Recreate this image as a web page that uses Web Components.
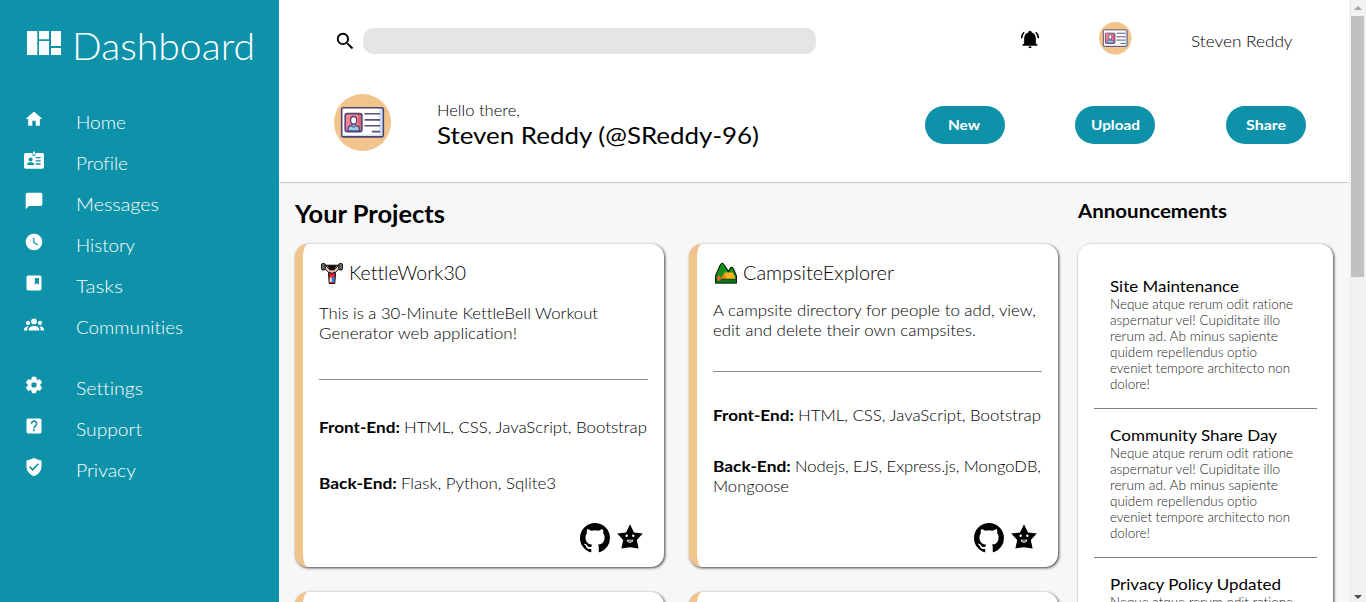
<!DOCTYPE html>
<html lang="en">
<head>
<meta charset="utf-8">
<title>Dashboard</title>
<style>
html,body{margin:0;height:100%;overflow:hidden}
body{font-family:Lato,"Open Sans",sans-serif;font-weight:300;font-size:16px;font-variant-ligatures:none;color:#000;background:#f7f7f7}
</style>
</head>
<body>
<dash-app></dash-app>
<script>
const define = (name, html, setup) => {
  const tpl = document.createElement('template');
  tpl.innerHTML = html;
  customElements.define(name, class extends HTMLElement {
    connectedCallback() {
      if (this.shadowRoot) return;
      this.attachShadow({mode: 'open'}).append(tpl.content.cloneNode(true));
      if (setup) setup(this, this.shadowRoot);
    }
  });
};

/* One line of text, widened so that it measures `w` pixels. */
define('fit-text', `<style>:host{display:inline-block;white-space:pre;vertical-align:baseline}span{display:inline-block;transform-origin:0 50%}</style><span><slot></slot></span>`, (el, root) => {
  const w = parseFloat(el.getAttribute('w'));
  const span = root.querySelector('span');
  const natural = span.getBoundingClientRect().width;
  if (w && natural) {
    el.style.width = w + 'px';
    span.style.transform = `scaleX(${(w / natural).toFixed(4)})`;
  }
});

const ICONS = {
  logo: ['0 0 34 24', '<path d="M0 0h10.3v24H0zM12 0h10v8.3H12zM12 10h10v14H12zM24 0h10v15H24zM24 17h10v7H24z"/>'],
  home: ['0 0 24 24', '<path d="M10 20v-6h4v6h5v-8h3L12 3 2 12h3v8z"/>'],
  profile: ['0 0 24 24', '<path fill-rule="evenodd" d="M2 3.500h8.300V7h3.400V3.500H22a2 2 0 0 1 2 2v15a2 2 0 0 1-2 2H2a2 2 0 0 1-2-2v-15a2 2 0 0 1 2-2zM8 9a2.400 2.400 0 1 0 0 4.800A2.400 2.400 0 0 0 8 9zM3.800 18h8.400v-1.200c0-1.500-2.500-2.200-4.200-2.200s-4.200.7-4.200 2.200zM14 8.500V10h6V8.500zM14 12.200v1.500h6v-1.500zM14 16v1.600h6V16z"/><path d="M11 1.800h2v4h-2z"/>'],
  chat: ['0 0 24 24', '<path d="M20 2H4c-1.100 0-2 .9-2 2v18l4-4h14c1.100 0 2-.9 2-2V4c0-1.100-.9-2-2-2z"/>'],
  clock: ['0 0 24 24', '<path fill-rule="evenodd" d="M12 2a10 10 0 1 0 0 20 10 10 0 0 0 0-20zm4.200 14L11 13V7h1.500v5.200l4.500 2.600z"/>'],
  tasks: ['0 0 24 24', '<path fill-rule="evenodd" d="M5 3h14a2 2 0 0 1 2 2v14a2 2 0 0 1-2 2H5a2 2 0 0 1-2-2V5c0-1.100.9-2 2-2zm8 3v8l2.500-1.700L18 14V6z"/>'],
  people: ['0 0 24 24', '<g transform="translate(0 1.400)"><circle cx="12" cy="7.500" r="3.400"/><circle cx="4.800" cy="9.300" r="2.500"/><circle cx="19.200" cy="9.300" r="2.500"/><path d="M5.700 18.500v-1.200c0-2.700 3-4.300 6.300-4.300s6.300 1.600 6.300 4.300v1.200zM0 18.500v-1c0-2.400 1.700-4 4.300-4.300.5 0 1 0 1.400.1-1.100 1-1.700 2.300-1.700 3.800v1.400zM24 18.500v-1c0-2.400-1.700-4-4.300-4.300-.5 0-1 0-1.400.1 1.100 1 1.700 2.300 1.700 3.800v1.400z"/></g>'],
  gear: ['0 0 24 24', '<path d="M19.140 12.940c.04-.3.06-.61.06-.94 0-.32-.02-.64-.07-.94l2.030-1.580c.18-.14.23-.41.12-.61l-1.920-3.320c-.12-.22-.37-.29-.59-.22l-2.390.96c-.5-.38-1.030-.7-1.620-.94l-.36-2.540c-.04-.24-.24-.41-.48-.41h-3.840c-.24 0-.43.17-.47.41l-.36 2.540c-.59.24-1.130.57-1.620.94l-2.390-.96c-.22-.08-.47 0-.59.22L2.740 8.870c-.12.21-.08.47.12.61l2.030 1.580c-.05.3-.09.63-.09.94s.02.64.07.94l-2.030 1.580c-.18.14-.23.41-.12.61l1.920 3.320c.12.22.37.29.59.22l2.390-.96c.5.38 1.030.7 1.620.94l.36 2.540c.05.24.24.41.48.41h3.840c.24 0 .44-.17.47-.41l.36-2.540c.59-.24 1.130-.56 1.620-.94l2.390.96c.22.08.47 0 .59-.22l1.920-3.320c.12-.22.07-.47-.12-.61l-2.010-1.580zM12 15.600a3.600 3.600 0 1 1 0-7.200 3.600 3.600 0 0 1 0 7.200z" stroke="currentColor" stroke-width=".7"/>'],
  help: ['0 0 24 24', '<rect x="3" y="3" width="18" height="18" rx="2"/><path d="M8.900 9.200a3.100 3.100 0 1 1 5.300 2.200C13 12.600 12 13 12 14.900" fill="none" stroke="#0d92a9" stroke-width="1.900"/><path d="M11 16.200h2v2h-2z" fill="#0d92a9"/>'],
  shield: ['0 0 24 24', '<path fill-rule="evenodd" d="M12 1c2.500 1.800 5.500 2.900 9 3.200V11.500c0 5-3.500 9.500-9 11.700-5.500-2.200-9-6.700-9-11.700V4.200C6.500 3.900 9.500 2.800 12 1zM10.400 16.800l7.600-8-1.400-1.400-6.200 6.500-2.900-2.900L6 12.400z"/>'],
  search: ['0 0 24 24', '<path d="M9.500 3A6.500 6.500 0 0 1 16 9.500c0 1.610-.59 3.090-1.560 4.230l.27.27h.79l5 5-1.500 1.500-5-5v-.79l-.27-.27A6.516 6.516 0 0 1 9.500 16a6.500 6.500 0 0 1 0-13m0 2C7 5 5 7 5 9.500S7 14 9.500 14 14 12 14 9.500 12 5 9.500 5z"/>'],
  bell: ['0 0 24 24', '<path d="M21 19v1H3v-1l2-2v-6c0-3.100 2.030-5.830 5-6.710V4a2 2 0 0 1 4 0v.29c2.970.88 5 3.610 5 6.710v6zM14 21a2 2 0 0 1-4 0M19.750 3.190l-1.420 1.420A8.980 8.980 0 0 1 21 11h2a11 11 0 0 0-3.250-7.810M1 11h2c0-2.400.96-4.700 2.670-6.390L4.250 3.190A11 11 0 0 0 1 11"/>'],
  github: ['0 0 16 16', '<path d="M8 0C3.580 0 0 3.580 0 8c0 3.540 2.290 6.530 5.470 7.590.4.070.55-.17.55-.38 0-.19-.01-.82-.01-1.490-2.010.37-2.530-.49-2.690-.94-.09-.23-.48-.94-.82-1.130-.28-.15-.68-.52-.01-.53.63-.01 1.080.58 1.230.82.72 1.210 1.870.87 2.330.66.070-.52.28-.87.51-1.070-1.780-.2-3.640-.89-3.640-3.950 0-.87.31-1.590.82-2.150-.08-.2-.36-1.020.08-2.120 0 0 .67-.21 2.200.82.64-.18 1.320-.27 2-.27s1.360.09 2 .27c1.530-1.040 2.200-.82 2.200-.82.44 1.100.16 1.920.08 2.120.51.56.82 1.270.82 2.150 0 3.070-1.870 3.750-3.650 3.950.29.25.54.73.54 1.480 0 1.070-.01 1.930-.01 2.200 0 .21.15.46.55.38A8.010 8.010 0 0 0 16 8c0-4.420-3.580-8-8-8z"/>'],
  star: ['0 0 26 25', '<path d="M13 .3l4 8.200 8.800 1-6 6.500 1.800 8.400-8.600-1.200-8.600 1.200L6.200 16 .2 9.500l8.800-1z"/><g fill="#fff"><circle cx="9.700" cy="11.800" r="1.200"/><circle cx="16.300" cy="11.800" r="1.200"/><path d="M9.700 15.800h6.600c-.2 2-1.600 3-3.300 3s-3.100-1-3.300-3z"/></g><path d="M11.200 16.600h3.600v.9h-3.600z"/>'],
  lifter: ['0 0 22 22', '<path d="M2.500 3.500h17" stroke="#222" stroke-width="1.600"/><path d="M2 5l5.800 5.500v4h6.400v-4L20 5l-2.200-2L14.500 6.500h-7L4.200 3z" fill="#f3c2aa" stroke="#111" stroke-width="1"/><path d="M6.500 3.400h9l-2 4.800h-5z" fill="#111"/><path d="M8 10l3 1.500 3-1.500.3 4.500-.5 7H8.200l-.5-7z" fill="#e6202c" stroke="#111" stroke-width="1"/><path d="M11 14.500h2.600v5.500H11z" fill="#2b77d8"/><path d="M8.700 15.500h2v4.500h-2z" fill="#eee"/><rect x=".4" y="1.500" width="3.800" height="6.500" rx="1.300" fill="#666" stroke="#111"/><rect x="17.800" y="1.500" width="3.800" height="6.500" rx="1.300" fill="#666" stroke="#111"/>'],
  camp: ['0 0 22 22', '<path d="M.5 21V14L5 3.500Q7.300-1 9.500 3.500l4 6 1.500-3q1.700-2.300 3.200 0L21.500 14v7z" fill="#14911c" stroke="#06200a" stroke-width="1.200"/><path d="M9.500 10.500h8.500l2.500 6.500H8z" fill="#fbb321"/><path d="M9.500 10.500L5.500 17H11z" fill="#e98112"/><path d="M.8 17.200h20.400V21H.8z" fill="#0b741b" stroke="#052d0a" stroke-width=".7"/><path d="M2 18.500h4l-.5-3-1.500-2.500-1.500 2.500z" fill="#f0622a"/>'],
  avatar: ['0 0 58 58', '<circle cx="29" cy="29" r="29" fill="#f1c48b"/><rect x="7.800" y="14" width="42.400" height="29.600" rx="2" fill="#fff"/><path d="M46 14h4v29h-4z" fill="#cfe3f6"/><path d="M9 41.500h40v1.500H9z" fill="#cfe3f6"/><rect x="7.800" y="14" width="42.400" height="29.600" rx="2" fill="none" stroke="#4d4272" stroke-width="1.600"/><g transform="translate(0 -.7)"><rect x="11.400" y="20.700" width="17" height="18.300" rx="2" fill="#fb8290"/><path d="M24.500 21h3.300v17.500h-3.300z" fill="#de6577"/><path d="M14.200 38.500v-2.200c0-2.300 2-3.500 4-3.500h3.600c2 0 4 1.200 4 3.500v2.200z" fill="#9bc9f3" stroke="#4d4272" stroke-width="1.300"/><path d="M18.300 30h3.400v3.500l-1.700 1.300-1.700-1.300z" fill="#b5b9de" stroke="#4d4272"/><ellipse cx="20" cy="27.500" rx="3.100" ry="3.900" fill="#fff" stroke="#4d4272" stroke-width="1.300"/><rect x="11.400" y="20.700" width="17" height="18.300" rx="2" fill="none" stroke="#4d4272" stroke-width="1.600"/><path d="M31 20.800h16M31 27h16M31 33h16M38.500 39h8.500" stroke="#5b4f80" stroke-width="1.700"/></g>'],
  up: ['0 0 8 4', '<path d="M4 0l4 4H0z"/>'],
  down: ['0 0 8 4', '<path d="M4 4L0 0h8z"/>']
};
define('dash-icon', `<style>:host{display:block;flex:none}svg{display:block;width:100%;height:100%}</style>`, (el, root) => {
  const [box, body] = ICONS[el.getAttribute('name')];
  const holder = document.createElement('template');
  holder.innerHTML = `<svg viewBox="${box}" fill="currentColor" aria-hidden="true">${body}</svg>`;
  root.append(holder.content);
});

const navRow = (icon, label, w) => `<div class="row"><dash-icon name="${icon}"></dash-icon><fit-text w="${w}">${label}</fit-text></div>`;

define('dash-sidebar', `<style>
:host{display:block;background:#0d92a9;color:#fff;height:602px}
.brand{display:flex;align-items:center;height:90px;padding-left:27px;font-size:37.500px}
.brand dash-icon{width:34px;height:24px;margin:0 10.500px 4px 0}
nav{padding-top:11px;font-size:18.300px}
.row{display:flex;align-items:center;height:41px;padding-left:24px}
.row dash-icon{width:20px;height:20px;margin:0 32px 5px 0}
.gap{height:20px}
</style>
<div class="brand"><dash-icon name="logo"></dash-icon><fit-text w="183">Dashboard</fit-text></div>
<nav>${navRow('home','Home',50)}${navRow('profile','Profile',52)}${navRow('chat','Messages',83)}${navRow('clock','History',59)}${navRow('tasks','Tasks',47)}${navRow('people','Communities',107)}
<div class="gap"></div>
${navRow('gear','Settings',67)}${navRow('help','Support',66)}${navRow('shield','Privacy',60)}</nav>`);

define('dash-button', `<style>
:host{display:block}
button{display:block;box-sizing:border-box;width:80px;height:38px;border:0;border-radius:19px;background:#0d92a9;color:#fff;font:700 14px/38px Lato,sans-serif;padding:0 3px 0 0}
</style><button><slot></slot></button>`);

define('dash-header', `<style>
:host{display:block;height:182px;background:#fff;box-shadow:0 2px 1px -1px rgba(0,0,0,.16);box-sizing:border-box}
.top{display:flex;align-items:center;height:82px;padding-left:55px}
.search{width:22.500px;height:22.500px;margin-right:6.500px}
.field{width:453px;height:26px;border-radius:10px;background:#e5e5e5;border:0;padding:0}
.bell{width:20px;height:20px;margin:0 59px 4px 204px}
.me{width:32.500px;height:32.500px;margin:0 59px 5px 0}
.user{margin-bottom:2px}
.greet{display:flex;align-items:center;height:82px;padding-left:54.500px}
.face{width:57px;height:57px;margin:0 46px 1px 0}
.name{display:flex;flex-direction:column;width:488px;padding-top:3px}
.hello{line-height:21px}
.who{font-size:24px;line-height:30px;font-weight:400}
.actions{display:flex;gap:70.500px;padding-top:4px}
</style>
<div class="top"><dash-icon class="search" name="search"></dash-icon><input class="field" aria-label="Search"><dash-icon class="bell" name="bell"></dash-icon><dash-icon class="me" name="avatar"></dash-icon><fit-text class="user" w="101.500">Steven Reddy</fit-text></div>
<div class="greet"><dash-icon class="face" name="avatar"></dash-icon>
<div class="name"><div class="hello"><fit-text w="83">Hello there,</fit-text></div><div class="who"><fit-text w="322">Steven Reddy (@SReddy-96)</fit-text></div></div>
<div class="actions"><dash-button><fit-text w="32">New</fit-text></dash-button><dash-button><fit-text w="49">Upload</fit-text></dash-button><dash-button><fit-text w="40">Share</fit-text></dash-button></div></div>`);

define('project-card', `<style>
:host{display:flex;flex-direction:column;box-sizing:border-box;height:323px;padding:17px 16px 14px 16px;background:#fff;border-left:8px solid #f1c48b;border-radius:13px;box-shadow:1px 1px 3px rgba(0,0,0,.75);line-height:20px}
.title{display:flex;align-items:center;height:24px;font-size:19px}
.title ::slotted(dash-icon){width:22px;height:22px;margin:0 6px 0 1.500px}
.desc{margin-top:var(--a)}
hr{width:100%;border:0;height:1px;background:#8f8f8f;margin:var(--b) 0 var(--c)}
.back{margin-top:var(--d)}
.links{display:flex;align-items:flex-start;margin-top:auto;justify-content:flex-end;padding-right:5px}
.gh{width:30px;height:30px}.st{width:26px;height:25px;margin:1px 0 0 7px}
</style>
<div class="title"><slot name="icon"></slot><slot name="title"></slot></div>
<div class="desc"><slot name="desc"></slot></div><hr>
<div><slot name="front"></slot></div><div class="back"><slot name="back"></slot></div>
<div class="links"><dash-icon class="gh" name="github"></dash-icon><dash-icon class="st" name="star"></dash-icon></div>`);

define('news-item', `<style>
:host{display:block;padding:0 16px}
.t{font-size:16px;line-height:20px;height:20px;font-weight:400}
.p{font-size:12.800px;line-height:16px;color:#222;height:96px}
</style><div class="t"><slot></slot></div>
<div class="p"><fit-text w="183">Neque atque rerum odit ratione</fit-text><br><fit-text w="170">aspernatur vel! Cupiditate illo</fit-text><br><fit-text w="168">rerum ad. Ab minus sapiente</fit-text><br><fit-text w="147">quidem repellendus optio</fit-text><br><fit-text w="180">eveniet tempore architecto non</fit-text><br><fit-text w="40">dolore!</fit-text></div>`);

define('dash-scrollbar', `<style>
:host{display:flex;flex-direction:column;align-items:center;background:#f1f1f1;height:602px}
.up{width:8px;height:4px;color:#a3a3a3;margin:6px 0}
.thumb{width:13px;height:261px;background:#c1c1c1}
.down{width:8px;height:4px;color:#505050;margin:auto 0 3px}
</style><dash-icon class="up" name="up"></dash-icon><div class="thumb"></div><dash-icon class="down" name="down"></dash-icon>`);

define('dash-app', `<style>
:host{display:grid;grid-template-columns:279px 1070px 17px;height:602px;overflow:hidden}
main{height:602px;overflow:hidden}
.body{display:flex;padding:17px 0 0 16px;gap:20px}
h2,h3{margin:0}
h2{font-size:24px;line-height:30px;height:30px;margin-bottom:15px}
h3{font-size:19px;line-height:24px;height:24px;margin-bottom:21px}
.grid{display:grid;grid-template-columns:369px 369px;gap:25px}
.a{--a:18px;--b:36px;--c:37px;--d:36px}
.b{--a:15px;--b:31px;--c:33px;--d:31px}
b{font-weight:700}
.panel{width:255px;height:460px;box-sizing:border-box;background:#fff;border-radius:13px;box-shadow:1px 1px 3px rgba(0,0,0,.75);padding:32px 16px}
.panel hr{border:0;height:1px;background:#808080;margin:16px 0}
</style>
<dash-sidebar></dash-sidebar>
<main><dash-header></dash-header>
<div class="body">
<section><h2><fit-text w="150">Your Projects</fit-text></h2>
<div class="grid">
<project-card class="a"><dash-icon slot="icon" name="lifter"></dash-icon><fit-text slot="title" w="117">KettleWork30</fit-text>
<div slot="desc"><fit-text w="279">This is a 30-Minute KettleBell Workout</fit-text><br><fit-text w="198">Generator web application!</fit-text></div>
<div slot="front"><b><fit-text w="85">Front-End: </fit-text></b><fit-text w="243">HTML, CSS, JavaScript, Bootstrap</fit-text></div>
<div slot="back"><b><fit-text w="82">Back-End: </fit-text></b><fit-text w="155">Flask, Python, Sqlite3</fit-text></div></project-card>
<project-card class="b"><dash-icon slot="icon" name="camp"></dash-icon><fit-text slot="title" w="151">CampsiteExplorer</fit-text>
<div slot="desc"><fit-text w="323">A campsite directory for people to add, view,</fit-text><br><fit-text w="263">edit and delete their own campsites.</fit-text></div>
<div slot="front"><b><fit-text w="85">Front-End: </fit-text></b><fit-text w="243">HTML, CSS, JavaScript, Bootstrap</fit-text></div>
<div slot="back"><b><fit-text w="82">Back-End: </fit-text></b><fit-text w="246">Nodejs, EJS, Express.js, MongoDB,</fit-text><br><fit-text w="76">Mongoose</fit-text></div></project-card>
<project-card class="a"></project-card><project-card class="b"></project-card>
</div></section>
<aside><h3><fit-text w="149">Announcements</fit-text></h3>
<div class="panel"><news-item><fit-text w="129">Site Maintenance</fit-text></news-item><hr><news-item><fit-text w="167">Community Share Day</fit-text></news-item><hr><news-item><fit-text w="171">Privacy Policy Updated</fit-text></news-item></div></aside>
</div></main>
<dash-scrollbar></dash-scrollbar>`);
</script>
</body>
</html>
